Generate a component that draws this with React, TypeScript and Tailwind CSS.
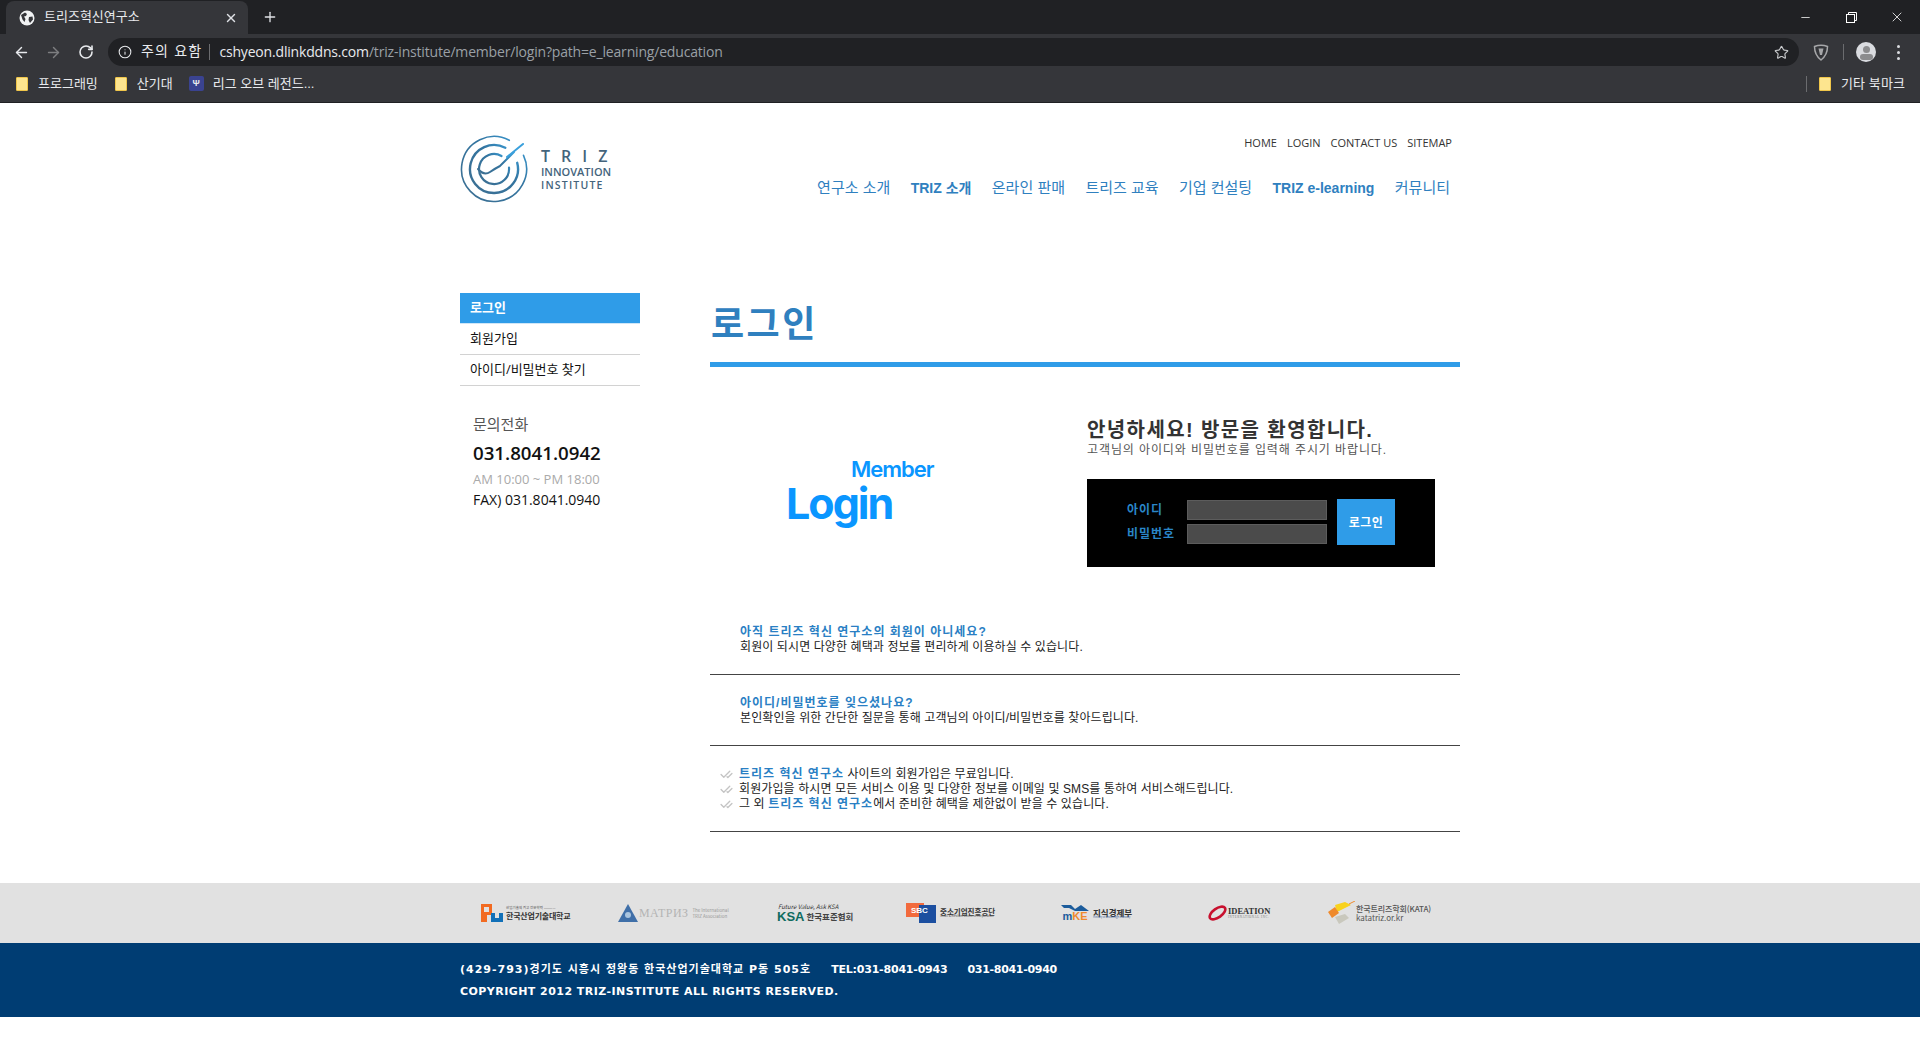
import { ArrowLeft, ArrowRight, CheckCheck, Info, Minus, Plus, RotateCw, Star, X } from "lucide-react";

function Folder() {
	return <div className="h-[14px] w-[12px] shrink-0 rounded-[1px] border border-[#f0c64a] bg-[#fde58f]" />;
}

function BrowserChrome() {
	return (
		<div className="h-[103px] border-b border-[#1f2023] bg-[#35363a] font-['Liberation_Sans','Noto_Sans_CJK_KR',sans-serif] text-white">
			<div className="flex h-[34px] items-end bg-[#202124] pl-[6px]">
				<div className="flex h-[33px] w-[242px] items-center rounded-t-lg bg-[#35363a] pl-[13px] pr-[10px]">
					<svg width="16" height="16" viewBox="0 0 16 16" className="shrink-0">
						<circle cx="8" cy="8" r="7.5" fill="#f1f3f4" />
						<path d="M2 5 L6 2.5 L8 4 L7 6 L5 6.5 L6.5 9 L5.5 12 L3.5 9.5Z M10 7 L13.5 6.5 L14 9.5 L11 13 L9.5 10Z" fill="#35363a" />
					</svg>
					<span className="mb-[2px] ml-[9px] flex-1 text-[13px] text-[#e8eaed]">트리즈혁신연구소</span>
					<X size={14} strokeWidth={2.4} className="text-[#dfe1e5]" />
				</div>
				<div className="ml-[14px] flex h-[34px] w-4 items-center justify-center">
					<Plus size={16} strokeWidth={2} className="text-[#dfe1e5]" />
				</div>
				<div className="ml-auto flex h-[34px] items-center">
					<div className="flex w-[46px] justify-center"><Minus size={13} strokeWidth={1.4} /></div>
					<div className="flex w-[46px] justify-center">
						<svg width="11" height="11" viewBox="0 0 11 11" fill="none" stroke="white">
							<rect x="0.5" y="2.5" width="8" height="8" />
							<path d="M2.5 2.5V0.5H10.5V8.5H8.5" />
						</svg>
					</div>
					<div className="flex w-[46px] justify-center"><X size={16} strokeWidth={1.2} /></div>
				</div>
			</div>
			<div className="flex h-[36px] items-center pl-[13px]">
				<ArrowLeft size={17} strokeWidth={2} className="shrink-0 text-[#e8eaed]" />
				<ArrowRight size={17} strokeWidth={2} className="ml-[15px] shrink-0 text-[#7d7e80]" />
				<RotateCw size={16} strokeWidth={2.4} className="ml-[16px] shrink-0 text-[#e8eaed]" />
				<div className="ml-[14px] flex h-[28px] w-[1691px] shrink-0 items-center rounded-full bg-[#202124] pl-[10px] pr-[10px]">
					<Info size={14} strokeWidth={1.8} className="text-[#e8eaed]" />
					<span className="mb-[2px] ml-[9px] text-[14px] tracking-[1.2px] text-[#e8eaed]">주의 요함</span>
					<span className="ml-[7px] h-4 w-px bg-[#6b6c6f]" />
					<span className="mb-[2px] ml-[9px] font-['Open_Sans',sans-serif] text-[14px] tracking-[-0.18px] text-[#e8eaed]">cshyeon.dlinkddns.com</span>
					<span className="mb-[2px] font-['Open_Sans',sans-serif] text-[14px] tracking-[-0.18px] text-[#9aa0a6]">/triz-institute/member/login?path=e_learning/education</span>
					<Star size={15} strokeWidth={1.8} className="ml-auto text-[#c8cacc]" />
				</div>
				<svg width="16" height="17" viewBox="0 0 15 17" fill="none" className="ml-[14px] shrink-0">
					<path d="M1 2.5 Q7.5 0 14 2.5 Q14 11 7.5 16 Q1 11 1 2.5Z" stroke="#a6a7a9" strokeWidth="1.5" />
					<path d="M5 4.5H10L8.5 11H6.5Z" fill="#a6a7a9" />
				</svg>
				<span className="ml-[14px] h-4 w-px shrink-0 bg-[#6b6c6f]" />
				<div className="ml-[12px] h-5 w-5 shrink-0 overflow-hidden rounded-full bg-[#dadce0]">
					<div className="mx-auto mt-1 h-[7px] w-[7px] rounded-full bg-[#8b8c8e]" />
					<div className="mx-auto mt-[1px] h-[6px] w-[13px] rounded-full bg-[#8b8c8e]" />
				</div>
				<div className="ml-[21px] flex shrink-0 flex-col gap-[3px]">
					<span className="h-[3px] w-[3px] rounded-full bg-[#dadce0]" />
					<span className="h-[3px] w-[3px] rounded-full bg-[#dadce0]" />
					<span className="h-[3px] w-[3px] rounded-full bg-[#dadce0]" />
				</div>
			</div>
			<div className="flex h-[32px] items-center pb-[5px] pl-[16px] pr-[15px] text-[13px] text-[#e8eaed]">
				<Folder />
				<span className="ml-[10px]">프로그래밍</span>
				<div className="ml-[17px]"><Folder /></div>
				<span className="ml-[10px]">산기대</span>
				<div className="ml-[16px] flex h-[15px] w-[15px] items-center justify-center rounded-[2px] bg-[#3a4390] text-[9px] font-bold">Ψ</div>
				<span className="ml-[9px]">리그 오브 레전드...</span>
				<span className="ml-auto h-4 w-px bg-[#6b6c6f]" />
				<div className="ml-[12px]"><Folder /></div>
				<span className="ml-[10px] tracking-[0.1px]">기타 북마크</span>
			</div>
		</div>
	);
}

function TrizLogo() {
	return (
		<div className="flex items-center">
			<svg width="68" height="68" viewBox="0 0 68 68" fill="none" strokeLinecap="round">
				<defs>
					<linearGradient id="ring" x1="0" y1="1" x2="1" y2="0">
						<stop offset="0" stopColor="#3d6f92" />
						<stop offset="0.6" stopColor="#33749f" />
						<stop offset="1" stopColor="#3aa0dc" />
					</linearGradient>
				</defs>
				<path d="M49.3 5.3 A32.5 32.5 0 1 0 63.5 20.3" stroke="url(#ring)" strokeWidth="1.6" />
				<path d="M45.3 12.8 A24 24 0 1 0 57.2 27.8" stroke="url(#ring)" strokeWidth="2.4" />
				<path d="M41.5 21 A15 15 0 1 0 49 32.7" stroke="url(#ring)" strokeWidth="2.2" />
				<path d="M18 34 Q24 41 30 37 Q36 33 40 31 L54 17" stroke="url(#ring)" strokeWidth="2" />
				<path d="M47 22 L63 9" stroke="#3aa0dc" strokeWidth="2" />
			</svg>
			<div className="ml-[13px] font-['Open_Sans',sans-serif] font-semibold text-[#44647c]">
				<div className="text-[16px] leading-[18px] tracking-[11px]">TRIZ</div>
				<div className="text-[11px] leading-[13px] tracking-[0px]">INNOVATION</div>
				<div className="text-[10.5px] leading-[14px] tracking-[1.2px]">INSTITUTE</div>
			</div>
		</div>
	);
}

function SiteHeader() {
	const topLinks = ["HOME", "LOGIN", "CONTACT US", "SITEMAP"];
	const nav = ["연구소 소개", "TRIZ 소개", "온라인 판매", "트리즈 교육", "기업 컨설팅", "TRIZ e-learning", "커뮤니티"];
	return (
		<header className="flex h-[190px] items-start justify-between pt-[32px]">
			<TrizLogo />
			<div className="flex flex-col items-end">
				<div className="flex gap-[10px] pr-[8px] font-['Open_Sans','Noto_Sans_CJK_KR',sans-serif] text-[11px] leading-[16px] text-[#333]">
					{topLinks.map((t) => (
						<span key={t}>{t}</span>
					))}
				</div>
				<nav className="mt-[27px] flex items-center gap-[20.4px] pr-[10px] text-[15px] leading-[20px] text-[#2f80bf]">
					{nav.map((t) => (
						<span key={t} className={t === "TRIZ e-learning" ? "text-[14px] font-bold" : t.startsWith("TRIZ") ? "text-[14px] font-semibold" : ""}>
							{t}
						</span>
					))}
				</nav>
			</div>
		</header>
	);
}

function Sidebar() {
	return (
		<aside className="w-[180px] shrink-0 font-['Open_Sans','Noto_Sans_CJK_KR',sans-serif]">
			<div className="flex h-[31px] items-center border-b border-[#cfe6f7] bg-[#2f9ce8] pl-[10px] text-[13px] font-semibold text-white">로그인</div>
			<div className="flex h-[31px] items-center border-b border-[#d2d2d2] pl-[10px] text-[13px] text-[#111]">회원가입</div>
			<div className="flex h-[31px] items-center border-b border-[#d2d2d2] pl-[10px] text-[13px] text-[#111]">아이디/비밀번호 찾기</div>
			<div className="mt-[28px] pl-[13px] leading-none">
				<div className="text-[15px] leading-[20px] text-[#555]">문의전화</div>
				<div className="mt-[7px] text-[18.7px] font-semibold leading-[24px] text-[#111]">031.8041.0942</div>
				<div className="mt-[6px] text-[13px] leading-[16px] text-[#aaa]">AM 10:00 ~ PM 18:00</div>
				<div className="mt-[5px] text-[14px] leading-[16px] text-[#111]">FAX) 031.8041.0940</div>
			</div>
		</aside>
	);
}

function LoginBox() {
	return (
		<div className="flex h-[88px] w-[348px] items-center bg-black pb-[2px] pl-[40px]">
			<div className="flex w-[60px] flex-col gap-[7px] text-[12px] font-bold leading-[17px] tracking-[1px] text-[#2a86c8]">
				<span>아이디</span>
				<span>비밀번호</span>
			</div>
			<div className="flex flex-col gap-1">
				<input className="h-5 w-[140px] border border-[#5c5c5c] bg-[#4b4b4b]" />
				<input className="h-5 w-[140px] border border-[#5c5c5c] bg-[#4b4b4b]" />
			</div>
			<button className="ml-[10px] h-[46px] w-[58px] bg-[#2f9ce8] pt-[1px] text-[12px] font-bold tracking-[0.5px] text-white">로그인</button>
		</div>
	);
}

function InfoBlock({ title, body }: { title: string; body: string }) {
	return (
		<div className="h-[71px] border-b border-[#444] pl-[30px] pt-[21px] text-[12px] leading-[15px] tracking-[0.1px]">
			<div className="font-bold tracking-[1px] text-[#2a7fc4]">{title}</div>
			<div className="text-[#222]">{body}</div>
		</div>
	);
}

function Bullet({ children }: { children: React.ReactNode }) {
	return (
		<li className="flex h-[15px] items-center text-[12px] leading-[15px] tracking-[0.1px] text-[#222]">
			<CheckCheck size={13} strokeWidth={2.5} className="mr-[6px] shrink-0 text-[#c4c4c4]" />
			<span>{children}</span>
		</li>
	);
}

function MainPanel() {
	const accent = "font-bold tracking-[1px] text-[#2a7fc4]";
	return (
		<main className="ml-[70px] w-[750px] font-['Liberation_Sans','Noto_Sans_CJK_KR',sans-serif]">
			<div className="flex h-[74px] items-start border-b-[5px] border-[#2f9ce8] pl-[1px]">
				<h1 className="font-['Noto_Sans_CJK_KR',sans-serif] text-[36px] font-bold leading-[56px] tracking-[2.5px] text-[#2f80bf]">로그인</h1>
			</div>
			<div className="flex h-[237px]">
				<div className="relative w-[377px] font-['Inter',sans-serif] font-semibold text-[#0a96ff]">
					<span className="absolute left-[141px] top-[90px] text-[22px] leading-[24px] tracking-[-1px]">Member</span>
					<span className="absolute left-[76px] top-[111px] text-[43px] font-bold leading-[50px] tracking-[-2px]">Login</span>
				</div>
				<div className="pt-[50px]">
					<h2 className="text-[20px] font-bold leading-[26px] tracking-[1.4px] text-[#333]">안녕하세요! 방문을 환영합니다.</h2>
					<p className="text-[12px] leading-[14px] tracking-[0.9px] text-[#555]">고객님의 아이디와 비밀번호를 입력해 주시기 바랍니다.</p>
					<div className="mt-[22px]">
						<LoginBox />
					</div>
				</div>
			</div>
			<InfoBlock title="아직 트리즈 혁신 연구소의 회원이 아니세요?" body="회원이 되시면 다양한 혜택과 정보를 편리하게 이용하실 수 있습니다." />
			<InfoBlock title="아이디/비밀번호를 잊으셨나요?" body="본인확인을 위한 간단한 질문을 통해 고객님의 아이디/비밀번호를 찾아드립니다." />
			<ul className="h-[86px] border-b border-[#444] pl-[10px] pt-[21px]">
				<Bullet>
					<span className={accent}>트리즈 혁신 연구소</span> 사이트의 회원가입은 무료입니다.
				</Bullet>
				<Bullet>회원가입을 하시면 모든 서비스 이용 및 다양한 정보를 이메일 및 SMS를 통하여 서비스해드립니다.</Bullet>
				<Bullet>
					그 외 <span className={accent}>트리즈 혁신 연구소</span>에서 준비한 혜택을 제한없이 받을 수 있습니다.
				</Bullet>
			</ul>
		</main>
	);
}

function PartnerLogos() {
	return (
		<div className="mx-auto flex h-[60px] w-[1000px] items-center font-['Noto_Sans_CJK_KR',sans-serif] text-[#444]">
			<div className="ml-[21px] flex w-[137px] items-center">
				<svg width="22" height="18" viewBox="0 0 22 18">
					<path d="M0 0H11V11H6V18H0Z" fill="#f26a21" />
					<path d="M3 3H8V8H3Z" fill="#e1e1e1" />
					<path d="M10 9H14V14H18V9H22V18H10Z" fill="#1170b8" />
				</svg>
				<div className="ml-[3px] flex flex-col leading-none">
					<span className="text-[3.5px] text-[#555]">산업기술의 최고 전문학력 ————</span>
					<span className="mt-[2px] text-[8px] font-bold tracking-[-0.2px] text-[#333]">한국산업기술대학교</span>
				</div>
			</div>
			<div className="flex w-[159px] items-center">
				<svg width="20" height="18" viewBox="0 0 20 18">
					<path d="M10 0L20 18H0Z" fill="#3f6fa8" />
					<circle cx="10" cy="11" r="3" fill="#a9c4de" />
				</svg>
				<span className="ml-[1px] font-['Liberation_Serif',serif] text-[12px] tracking-[0.4px] text-[#b4b4b4]">МАТРИЗ</span>
				<span className="ml-[4px] w-[40px] text-[4.5px] leading-[6px] text-[#9a9a9a]">The International TRIZ Association</span>
			</div>
			<div className="flex w-[129px] flex-col leading-none">
				<span className="pl-[1px] text-[6px] italic text-[#333]">Future Value, Ask KSA</span>
				<div className="flex items-center">
					<span className="font-['Liberation_Sans',sans-serif] text-[13px] font-bold text-[#0f6b5f]">KSA</span>
					<span className="ml-[2px] text-[8.5px] font-bold text-[#444]">한국표준협회</span>
				</div>
			</div>
			<div className="flex w-[155px] items-center">
				<div className="relative h-[20px] w-[30px] font-['Liberation_Sans',sans-serif]">
					<div className="absolute left-0 top-0 h-[14px] w-[18px] bg-[#f26a3d]" />
					<div className="absolute left-[13px] top-[2px] h-[18px] w-[17px] bg-[#1c4fa0]" />
					<span className="absolute left-[5px] top-[3px] text-[8px] font-bold leading-[10px] text-white">SBC</span>
				</div>
				<div className="ml-[4px] flex flex-col leading-none">
					<span className="text-[7.5px] font-bold text-[#333]">중소기업진흥공단</span>
					<span className="text-[3px] text-[#555]">Small & medium Business Corporation</span>
				</div>
			</div>
			<div className="flex w-[147px] items-center">
				<div className="flex flex-col items-center font-['Liberation_Sans',sans-serif] leading-none">
					<svg width="28" height="6" viewBox="0 0 28 6"><path d="M0 0H10L14 4L20 0L28 6H20L14 6L8 3H3Z" fill="#1c5c9c" /></svg>
					<span className="text-[11px] font-bold"><span className="text-[#1c5c9c]">m</span><span className="text-[#ef8a2c]">KE</span></span>
				</div>
				<div className="ml-[4px] flex flex-col leading-none">
					<span className="text-[8.5px] font-bold text-[#333]">지식경제부</span>
					<span className="text-[2.5px] text-[#3a5f98]">Ministry of Knowledge Economy</span>
				</div>
			</div>
			<div className="flex w-[119px] items-center">
				<svg width="19" height="16" viewBox="0 0 19 16" fill="none">
					<ellipse cx="9.5" cy="8" rx="9" ry="4.5" transform="rotate(-35 9.5 8)" stroke="#c8102e" strokeWidth="2.6" />
				</svg>
				<div className="ml-[1px] flex flex-col font-['Liberation_Serif',serif] leading-none">
					<span className="text-[8.5px] font-bold text-[#333]">IDEATION</span>
					<span className="text-[3px] tracking-[0.6px] text-[#777]">INTERNATIONAL INC.</span>
				</div>
			</div>
			<div className="flex items-center">
				<svg width="28" height="24" viewBox="0 0 28 24">
					<path d="M8 4L18 1L24 4L10 11Z" fill="#f8d21c" />
					<path d="M1 11L8 6L12 12L5 17Z" fill="#ef8a2c" />
					<path d="M8 16L18 13L22 17L12 23Z" fill="#c9c8bd" />
					<path d="M22 3L28 0" stroke="#ef8a2c" />
				</svg>
				<div className="ml-[1px] flex flex-col leading-[9px]">
					<span className="text-[8px] font-medium tracking-[-0.1px] text-[#555]">한국트리즈학회(KATA)</span>
					<span className="text-[8px] text-[#555]">katatriz.or.kr</span>
				</div>
			</div>
		</div>
	);
}

function SiteFooter() {
	return (
		<footer>
			<div className="bg-[#e1e1e1]">
				<PartnerLogos />
			</div>
			<div className="h-[74px] bg-[#003d73]">
				<div className="mx-auto w-[1000px] pt-[16px] font-['DejaVu_Sans','Noto_Sans_CJK_KR',sans-serif] text-[11px] font-bold leading-[22px] text-white">
					<div className="flex">
						<span className="tracking-[1px]">(429-793)경기도 시흥시 정왕동 한국산업기술대학교 P동 505호</span>
						<span className="ml-[20px] tracking-[-0.2px]">TEL:031-8041-0943</span>
						<span className="ml-[20px] tracking-[-0.3px]">031-8041-0940</span>
					</div>
					<div className="tracking-[0.45px]">COPYRIGHT 2012 TRIZ-INSTITUTE ALL RIGHTS RESERVED.</div>
				</div>
			</div>
		</footer>
	);
}

export default function App() {
	return (
		<div className="min-h-[1050px] bg-white font-['Liberation_Sans','Noto_Sans_CJK_KR',sans-serif]">
			<BrowserChrome />
			<div className="mx-auto h-[780px] w-[1000px]">
				<SiteHeader />
				<div className="flex">
					<Sidebar />
					<MainPanel />
				</div>
			</div>
			<SiteFooter />
		</div>
	);
}
